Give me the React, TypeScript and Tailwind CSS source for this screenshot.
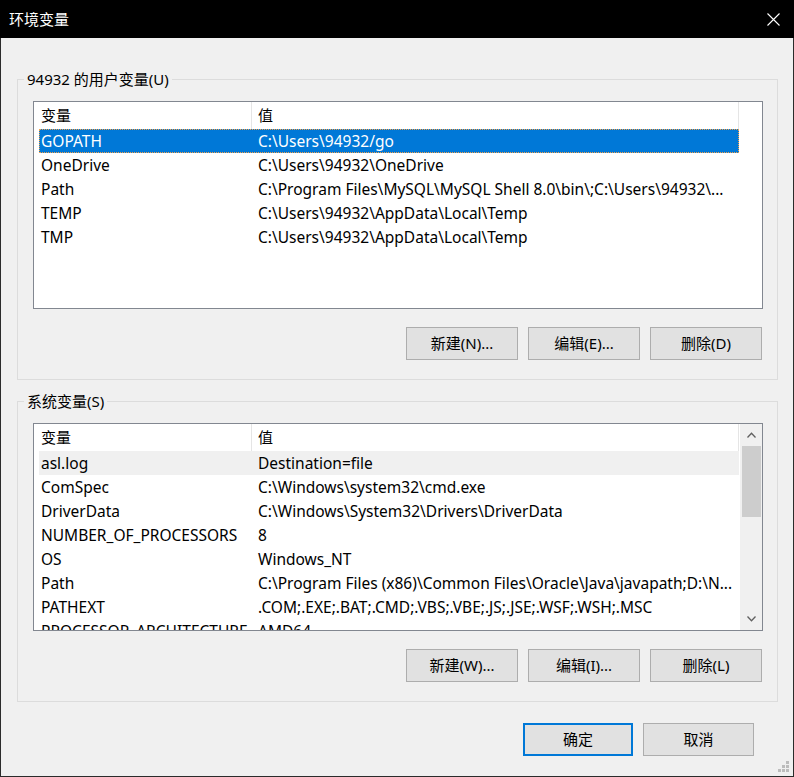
import React from "react";

const FONT = "font-['Noto_Sans','Noto_Sans_CJK_SC',sans-serif]";

type Row = [string, string];

const userRows: Row[] = [
  ["GOPATH", "C:\\Users\\94932/go"],
  ["OneDrive", "C:\\Users\\94932\\OneDrive"],
  ["Path", "C:\\Program Files\\MySQL\\MySQL Shell 8.0\\bin\\;C:\\Users\\94932\\..."],
  ["TEMP", "C:\\Users\\94932\\AppData\\Local\\Temp"],
  ["TMP", "C:\\Users\\94932\\AppData\\Local\\Temp"],
];

const sysRows: Row[] = [
  ["asl.log", "Destination=file"],
  ["ComSpec", "C:\\Windows\\system32\\cmd.exe"],
  ["DriverData", "C:\\Windows\\System32\\Drivers\\DriverData"],
  ["NUMBER_OF_PROCESSORS", "8"],
  ["OS", "Windows_NT"],
  ["Path", "C:\\Program Files (x86)\\Common Files\\Oracle\\Java\\javapath;D:\\N..."],
  ["PATHEXT", ".COM;.EXE;.BAT;.CMD;.VBS;.VBE;.JS;.JSE;.WSF;.WSH;.MSC"],
  ["PROCESSOR_ARCHITECTURE", "AMD64"],
];

function Header() {
  return (
    <div className="flex h-[27px] w-[705px] shrink-0 items-center text-black">
      <div className="flex h-full w-[218px] items-center border-r border-[#e5e5e5] pl-[7px]">变量</div>
      <div className="flex h-full flex-1 items-center border-r border-[#e5e5e5] pl-[6px]">值</div>
    </div>
  );
}

function ListRow({ row, mode }: { row: Row; mode: "sel" | "gray" | "none" }) {
  const base = "ml-[5px] flex h-[24px] w-[700px] shrink-0 items-center whitespace-nowrap pt-[2px] text-[15.5px]";
  const cls =
    mode === "sel"
      ? "bg-[#0078d7] text-white outline-1 outline-dotted outline-[#f3a14a] -outline-offset-1"
      : mode === "gray"
      ? "bg-[#f0f0f0] text-black"
      : "text-black";
  return (
    <div className={`${base} ${cls}`}>
      <div className="w-[213px] shrink-0 overflow-hidden pl-[2px]">{row[0]}</div>
      <div className="flex-1 overflow-hidden pl-[6px]">{row[1]}</div>
    </div>
  );
}

function Chevron({ up }: { up?: boolean }) {
  return (
    <svg width="9" height="6" viewBox="0 0 9 6" className="block">
      {up ? (
        <path d="M0.5 5.5 L4.5 1.2 L8.5 5.5" fill="none" stroke="#606060" strokeWidth="1.3" />
      ) : (
        <path d="M0.5 0.5 L4.5 4.8 L8.5 0.5" fill="none" stroke="#606060" strokeWidth="1.3" />
      )}
    </svg>
  );
}

function Btn({ label, w = "w-[112px]", primary }: { label: string; w?: string; primary?: boolean }) {
  return (
    <div
      className={`flex h-[33px] ${w} items-center justify-center bg-[#e1e1e1] text-black ${
        primary ? "border-2 border-[#0078d7]" : "border border-[#adadad]"
      }`}
    >
      {label}
    </div>
  );
}

function Group({
  title,
  rows,
  grayFirst,
  scroll,
  buttons,
}: {
  title: string;
  rows: Row[];
  grayFirst?: boolean;
  scroll?: boolean;
  buttons: string[];
}) {
  return (
    <div className="relative ml-[16px] w-[761px] border border-[#dcdcdc] pl-[15px] pr-[14px] pt-[21px] pb-[19px]">
      <div className="absolute left-[6px] top-[-11px] bg-[#f0f0f0] px-[3px] leading-[20px] text-black">{title}</div>
      <div className="flex h-[208px] w-[730px] overflow-hidden border border-[#828790] bg-white">
        <div className="flex min-w-0 flex-1 flex-col overflow-hidden">
          <Header />
          {rows.map((r, i) => (
            <ListRow
              key={r[0] + i}
              row={r}
              mode={!grayFirst && i === 0 ? "sel" : grayFirst && i === 0 ? "gray" : "none"}
            />
          ))}
        </div>
        {scroll ? (
          <div className="flex w-[22px] shrink-0 flex-col items-center bg-[#f0f0f0]">
            <div className="flex h-[22px] w-full shrink-0 items-center justify-center">
              <Chevron up />
            </div>
            <div className="h-[71px] w-[19px] shrink-0 bg-[#cdcdcd]" />
            <div className="flex-1" />
            <div className="flex h-[22px] w-full shrink-0 items-center justify-center">
              <Chevron />
            </div>
          </div>
        ) : (
          <div className="w-[23px] shrink-0" />
        )}
      </div>
      <div className="mt-[18px] flex justify-end gap-[10px] pr-[1px]">
        {buttons.map((b) => (
          <Btn key={b} label={b} />
        ))}
      </div>
    </div>
  );
}

export default function App() {
  return (
    <div className={`${FONT} h-[777px] w-[794px] bg-[#2b2b2b] text-[15px]`}>
      <div className="ml-[1px] flex h-[776px] w-[792px] flex-col bg-[#f0f0f0]">
        <div className="-ml-[1px] flex h-[38px] w-[794px] shrink-0 items-center justify-between bg-black pl-[9px] pr-[14px]">
          <span className="text-[15px] text-white">环境变量</span>
          <svg width="13" height="13" viewBox="0 0 13 13">
            <path d="M0.5 0.5 L12.5 12.5 M12.5 0.5 L0.5 12.5" stroke="#ffffff" strokeWidth="1.1" />
          </svg>
        </div>
        <div className="mt-[41px] shrink-0">
          <Group title="94932 的用户变量(U)" rows={userRows} buttons={["新建(N)...", "编辑(E)...", "删除(D)"]} />
        </div>
        <div className="mt-[21px] shrink-0">
          <Group
            title="系统变量(S)"
            rows={sysRows}
            grayFirst
            scroll
            buttons={["新建(W)...", "编辑(I)...", "删除(L)"]}
          />
        </div>
        <div className="mt-[21px] flex shrink-0 justify-end gap-[10px] pr-[39px]">
          <Btn label="确定" w="w-[110px]" primary />
          <Btn label="取消" w="w-[111px]" />
        </div>
        <div className="flex flex-1 items-end justify-end pb-[4px] pr-[4px]">
          <svg width="11" height="11" viewBox="0 0 11 11">
            <rect x="8" y="0" width="3" height="3" fill="#bcbcbc" />
            <rect x="4" y="4" width="3" height="3" fill="#bcbcbc" />
            <rect x="8" y="4" width="3" height="3" fill="#bcbcbc" />
            <rect x="0" y="8" width="3" height="3" fill="#bcbcbc" />
            <rect x="4" y="8" width="3" height="3" fill="#bcbcbc" />
            <rect x="8" y="8" width="3" height="3" fill="#bcbcbc" />
          </svg>
        </div>
      </div>
    </div>
  );
}
